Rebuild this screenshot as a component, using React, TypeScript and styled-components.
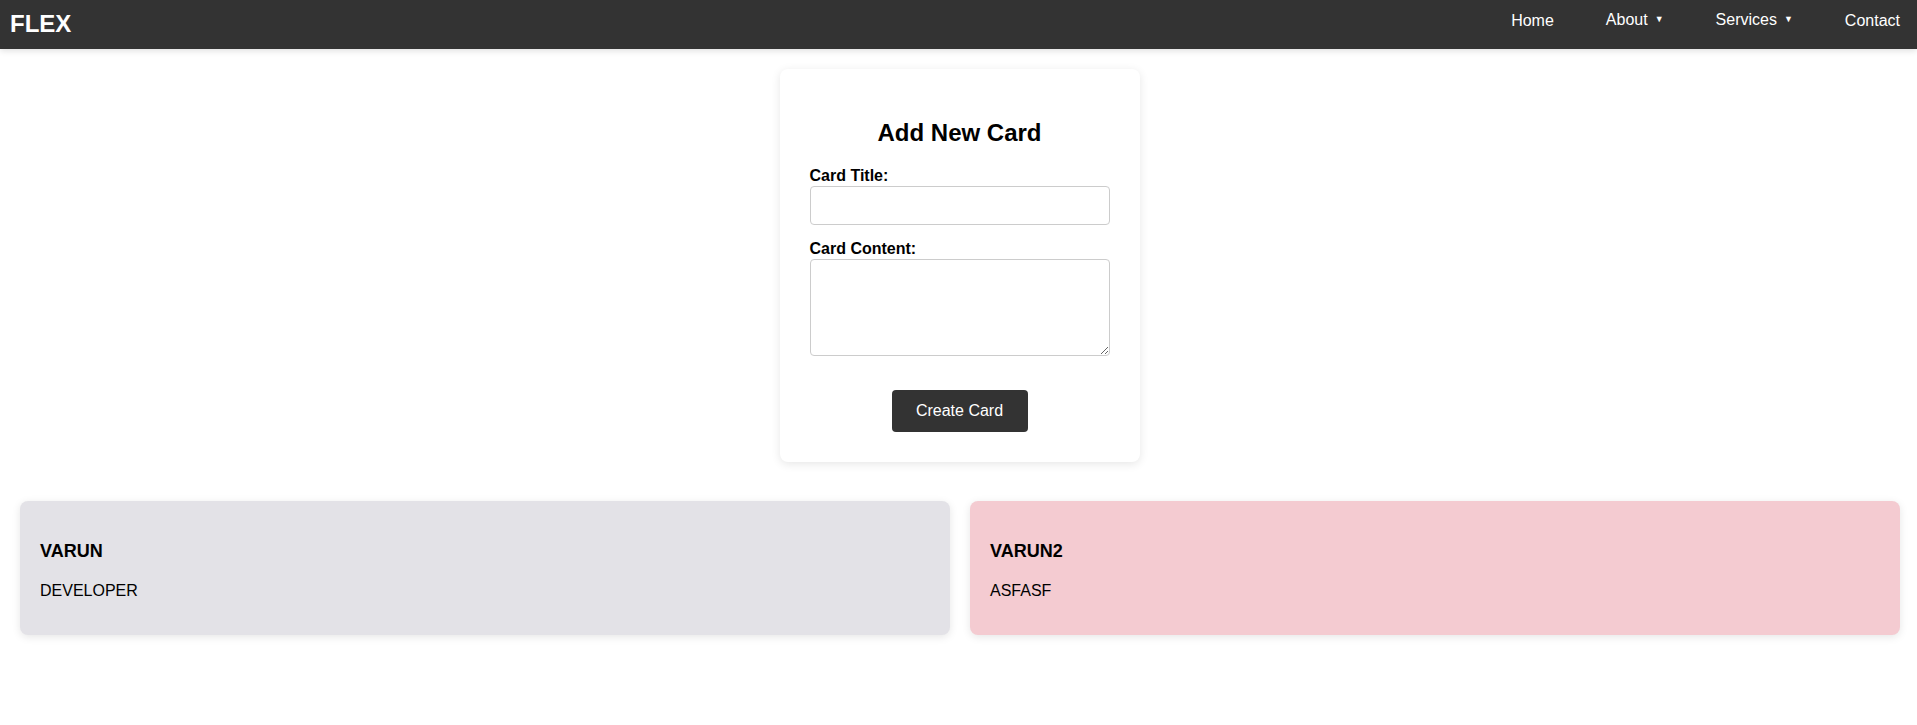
import styled, { createGlobalStyle } from "styled-components";

const GlobalStyle = createGlobalStyle`
  body {
    margin: 0;
    font-family: "Liberation Sans", Arial, sans-serif;
    background: #fff;
    color: #000;
  }
`;

type CardItem = { title: string; content: string; color: string };

const cards: CardItem[] = [
  { title: "VARUN", content: "DEVELOPER", color: "#e3e2e7" },
  { title: "VARUN2", content: "ASFASF", color: "#f4cbd1" },
];

export default function App() {
  return (
    <>
      <GlobalStyle />
      <NavBar>
        <Logo>FLEX</Logo>
        <NavList>
          <NavLink>Home</NavLink>
          <NavLink $dropdown>
            About<Caret>▼</Caret>
          </NavLink>
          <NavLink $dropdown>
            Services<Caret>▼</Caret>
          </NavLink>
          <NavLink>Contact</NavLink>
        </NavList>
      </NavBar>

      <FormCard>
        <FormTitle>Add New Card</FormTitle>
        <FormGroup>
          <Label htmlFor="title">Card Title:</Label>
          <TextInput id="title" type="text" />
        </FormGroup>
        <FormGroup>
          <Label htmlFor="content">Card Content:</Label>
          <TextArea id="content" />
        </FormGroup>
        <ButtonRow>
          <CreateButton type="button">Create Card</CreateButton>
        </ButtonRow>
      </FormCard>

      <CardGrid>
        {cards.map((c) => (
          <Card key={c.title} $bg={c.color}>
            <CardTitle>{c.title}</CardTitle>
            <CardText>{c.content}</CardText>
          </Card>
        ))}
      </CardGrid>
    </>
  );
}

const NavBar = styled.nav`
  height: 49px;
  background: #333;
  display: flex;
  align-items: center;
  justify-content: space-between;
  padding: 0 17px 0 10px;
  box-shadow: 0 2px 6px rgba(0, 0, 0, 0.12);
`;

const Logo = styled.div`
  color: #fff;
  font: 700 24px/1 "Liberation Sans", Arial, sans-serif;
  margin-top: -2px;
`;

const NavList = styled.div`
  display: flex;
  align-items: center;
  gap: 52px;
`;

const NavLink = styled.a<{ $dropdown?: boolean }>`
  color: #fff;
  font: 400 16px/1 "Liberation Sans", Arial, sans-serif;
  cursor: pointer;
  margin-top: ${(p) => (p.$dropdown ? "-10px" : "-8px")};
  display: flex;
  align-items: center;
`;

const Caret = styled.span`
  font-size: 9px;
  margin-left: 7px;
`;

const FormCard = styled.section`
  width: 360px;
  box-sizing: border-box;
  margin: 20px auto 19px;
  padding: 30px;
  background: #fff;
  border-radius: 8px;
  box-shadow: 0 2px 10px rgba(0, 0, 0, 0.1);
  transform: translateX(1px);
`;

const FormTitle = styled.h2`
  text-align: center;
  font: 700 24px "Liberation Sans", Arial, sans-serif;
  margin: 20px 0 20px;
`;

const FormGroup = styled.div`
  display: flex;
  flex-direction: column;
  margin-bottom: 15px;
`;

const Label = styled.label`
  font: 700 16px "Liberation Sans", Arial, sans-serif;
  margin-bottom: 1px;
`;

const fieldBase = `
  width: 100%;
  box-sizing: border-box;
  border: 1px solid #ccc;
  border-radius: 4px;
  padding: 10px;
  font: 400 16px "Liberation Sans", Arial, sans-serif;
`;

const TextInput = styled.input`
  ${fieldBase};
  height: 39px;
`;

const TextArea = styled.textarea`
  ${fieldBase};
  height: 97px;
  resize: vertical;
  display: block;
`;

const ButtonRow = styled.div`
  display: flex;
  justify-content: center;
  padding-top: 19px;
`;

const CreateButton = styled.button`
  width: 136px;
  height: 42px;
  background: #333;
  color: #fff;
  border: none;
  border-radius: 4px;
  font: 400 16px "Liberation Sans", Arial, sans-serif;
  cursor: pointer;
`;

const CardGrid = styled.div`
  display: grid;
  grid-template-columns: 1fr 1fr;
  gap: 20px;
  padding: 20px 17px 20px 20px;
`;

const Card = styled.article<{ $bg: string }>`
  background: ${(p) => p.$bg};
  border-radius: 8px;
  padding: 20px;
  box-shadow: 0 2px 8px rgba(0, 0, 0, 0.1);
`;

const CardTitle = styled.h3`
  font: 700 18px "Liberation Sans", Arial, sans-serif;
  margin: 20px 0 20px;
`;

const CardText = styled.p`
  font: 400 16px "Liberation Sans", Arial, sans-serif;
  margin: 0 0 15px;
`;
